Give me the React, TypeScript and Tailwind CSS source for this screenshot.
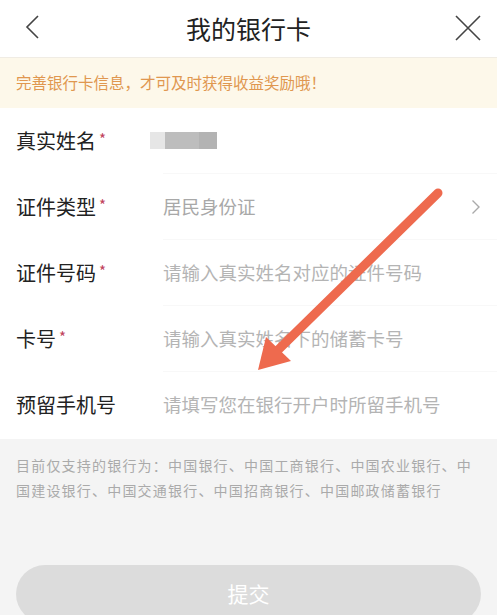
import React from "react";

const font = { fontFamily: '"Noto Sans CJK SC", "Noto Sans", sans-serif' };

function Row({ label, required, value, placeholder, chevron, last }: { label: string; required?: boolean; value?: React.ReactNode; placeholder?: string; chevron?: boolean; last?: boolean }) {
  return (
    <div className="flex h-[66px] items-center">
      <div className="flex w-[163px] shrink-0 items-center pl-4 text-[20px] text-[#222]">
        {label}
        {required && <span className="ml-[3px] -mt-[4px] text-[15px] text-[#c0415c]">*</span>}
      </div>
      <div className={`flex h-full flex-1 items-center ${last ? "" : "border-b border-[#f8f8f8]"}`}>
        {value ?? <span className="text-[18.5px] text-[#b4b4b4]">{placeholder}</span>}
        {chevron && (
          <svg className="ml-auto mr-[16px]" width="10" height="16" viewBox="0 0 10 16" fill="none">
            <path d="M1.5 1.5 L8 8 L1.5 14.5" stroke="#aaa" strokeWidth="1.4" />
          </svg>
        )}
      </div>
    </div>
  );
}

export default function App() {
  return (
    <div className="relative h-[615px] w-[497px] overflow-hidden bg-[#f4f4f4]" style={font}>
      <div className="relative flex h-[58px] items-center justify-center border-b border-[#f0ece4] bg-white">
        <svg className="absolute left-[24px] top-[14px]" width="18" height="26" viewBox="0 0 18 26" fill="none">
          <path d="M14 2 L3 13 L14 24" stroke="#444" strokeWidth="1.6" />
        </svg>
        <span className="text-[25px] text-[#222]">我的银行卡</span>
        <svg className="absolute left-[454px] top-[14px]" width="28" height="28" viewBox="0 0 28 28" fill="none">
          <path d="M2 2 L26 26 M26 2 L2 26" stroke="#444" strokeWidth="1.6" />
        </svg>
      </div>
      <div className="flex h-[50px] items-center bg-[#fdf8ea] pl-4 text-[15.5px] text-[#e0974f]">
        完善银行卡信息，才可及时获得收益奖励哦！
      </div>
      <div className="bg-white pb-[1px]">
        <Row
          label="真实姓名"
          required
          value={
            <div className="-ml-[13px] flex h-[17px] items-center">
              <div className="h-[17px] w-[15px] bg-[#e6e6e6]" />
              <div className="h-[17px] w-[34px] bg-[#bdbdbd]" />
              <div className="h-[17px] w-[18px] bg-[#b3b3b3]" />
            </div>
          }
        />
        <Row label="证件类型" required value={<span className="text-[18.5px] text-[#a8a8a8]">居民身份证</span>} chevron />
        <Row label="证件号码" required placeholder="请输入真实姓名对应的证件号码" />
        <Row label="卡号" required placeholder="请输入真实姓名下的储蓄卡号" />
        <Row label="预留手机号" placeholder="请填写您在银行开户时所留手机号" last />
      </div>
      <div className="px-4 pt-[14px] text-[14px] leading-[25px] tracking-[1.2px] text-[#aaa]">
        目前仅支持的银行为：中国银行、中国工商银行、中国农业银行、中国建设银行、中国交通银行、中国招商银行、中国邮政储蓄银行
      </div>
      <div className="mx-4 mt-[62px] flex h-[58px] items-center justify-center rounded-full bg-[#dcdcdc] text-[21px] text-white">
        提交
      </div>
      <svg className="pointer-events-none absolute left-0 top-0" width="497" height="615" viewBox="0 0 497 615" fill="none">
        <line x1="438" y1="193" x2="278" y2="350" stroke="#ee6a4e" strokeWidth="9" strokeLinecap="round" />
        <polygon points="258,370 266,337 291,361" fill="#ee6a4e" />
      </svg>
    </div>
  );
}
